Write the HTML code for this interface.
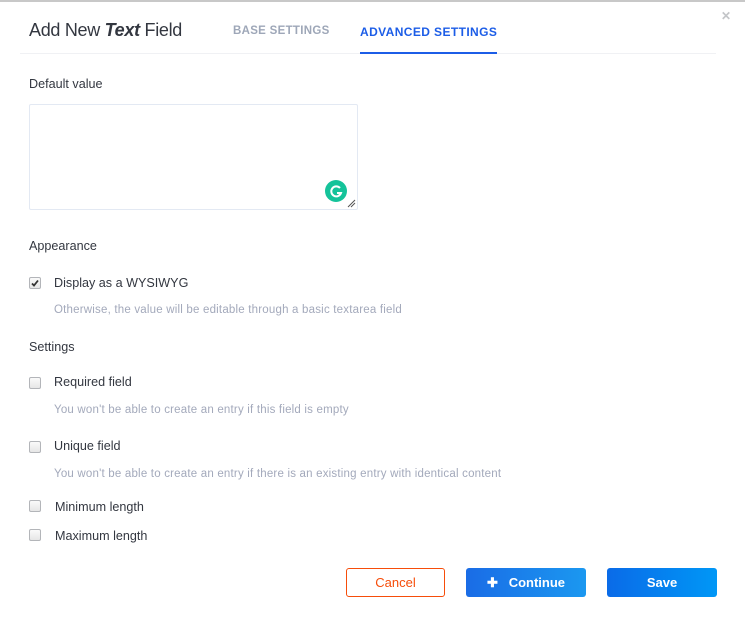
<!DOCTYPE html>
<html><head><style>
body{margin:0;width:745px;height:626px;background:#fff;font-family:"Liberation Sans",sans-serif;position:relative;overflow:hidden;color:#333740}
.a{position:absolute;white-space:nowrap}
.l{font-size:12.6px;color:#333740}
.h{font-size:11.5px;color:#a3a9bb;letter-spacing:0.2px}
.cb{position:absolute;width:10px;height:10px;border:1px solid #b3b5b9;border-radius:2px;background:linear-gradient(#fafafa,#e6e6e6)}
.btn{position:absolute;top:568px;height:29px;border-radius:3px;font-size:13px;font-weight:bold;color:#fff;display:flex;align-items:center;justify-content:center}
</style></head><body>
<div class="a" style="left:0;top:0;width:745px;height:2px;background:#c8c8c8"></div>
<div class="a" style="left:29px;top:20px;font-size:18px;color:#333740;letter-spacing:-0.3px">Add New <b><i>Text</i></b> Field</div>
<div class="a" style="left:233px;top:25px;font-size:11.5px;font-weight:bold;color:#9ea7b8;letter-spacing:0.3px">BASE SETTINGS</div>
<div class="a" style="left:360px;top:25px;font-size:12px;font-weight:bold;color:#1c5de7;letter-spacing:0.4px">ADVANCED SETTINGS</div>
<div class="a" style="left:20px;top:53px;width:696px;height:1px;background:#f0f1f4"></div>
<div class="a" style="left:360px;top:52px;width:137px;height:2px;background:#1c5de7"></div>
<div class="a" style="left:721px;top:9px;font-size:12px;color:#c3c5c8;font-weight:bold">✕</div>
<div class="a l" style="left:29px;top:77px">Default value</div>
<div class="a" style="left:29px;top:104px;width:327px;height:104px;border:1px solid #e3e9f3;border-radius:2px"></div>
<div class="a" style="left:325px;top:180px;width:22px;height:22px;border-radius:50%;background:#15c39a"></div>
<svg class="a" style="left:325px;top:180px" width="22" height="22"><path d="M15 8 A5 5 0 1 0 16 13 L12 13" fill="none" stroke="#fff" stroke-width="2"/></svg>
<svg class="a" style="left:347px;top:199px" width="9" height="9"><path d="M1 8L8 1M4 8L8 4" stroke="#555" stroke-width="1"/></svg>
<div class="a l" style="left:29px;top:239px">Appearance</div>
<div class="cb" style="left:29px;top:277px"></div>
<svg class="a" style="left:29px;top:277px" width="12" height="12"><path d="M3 6.5L5 8.5L9 3.5" fill="none" stroke="#333" stroke-width="1.8"/></svg>
<div class="a l" style="left:54px;top:276px">Display as a WYSIWYG</div>
<div class="a h" style="left:54px;top:304px">Otherwise, the value will be editable through a basic textarea field</div>
<div class="a l" style="left:29px;top:340px">Settings</div>
<div class="cb" style="left:29px;top:377px"></div>
<div class="a l" style="left:54px;top:375px">Required field</div>
<div class="a h" style="left:54px;top:404px">You won't be able to create an entry if this field is empty</div>
<div class="cb" style="left:29px;top:441px"></div>
<div class="a l" style="left:54px;top:439px">Unique field</div>
<div class="a h" style="left:54px;top:468px">You won't be able to create an entry if there is an existing entry with identical content</div>
<div class="cb" style="left:29px;top:500px"></div>
<div class="a l" style="left:55px;top:500px">Minimum length</div>
<div class="cb" style="left:29px;top:529px"></div>
<div class="a l" style="left:55px;top:529px">Maximum length</div>
<div class="btn" style="left:346px;width:97px;height:27px;border:1px solid #f64d0a;color:#f64d0a;font-weight:normal">Cancel</div>
<div class="btn" style="left:466px;width:120px;background:linear-gradient(90deg,#1a6ce6,#1b98f0)">✚&nbsp;&nbsp;&nbsp;Continue</div>
<div class="btn" style="left:607px;width:110px;background:linear-gradient(90deg,#0a6be8,#0097f6)">Save</div>
</body></html>
